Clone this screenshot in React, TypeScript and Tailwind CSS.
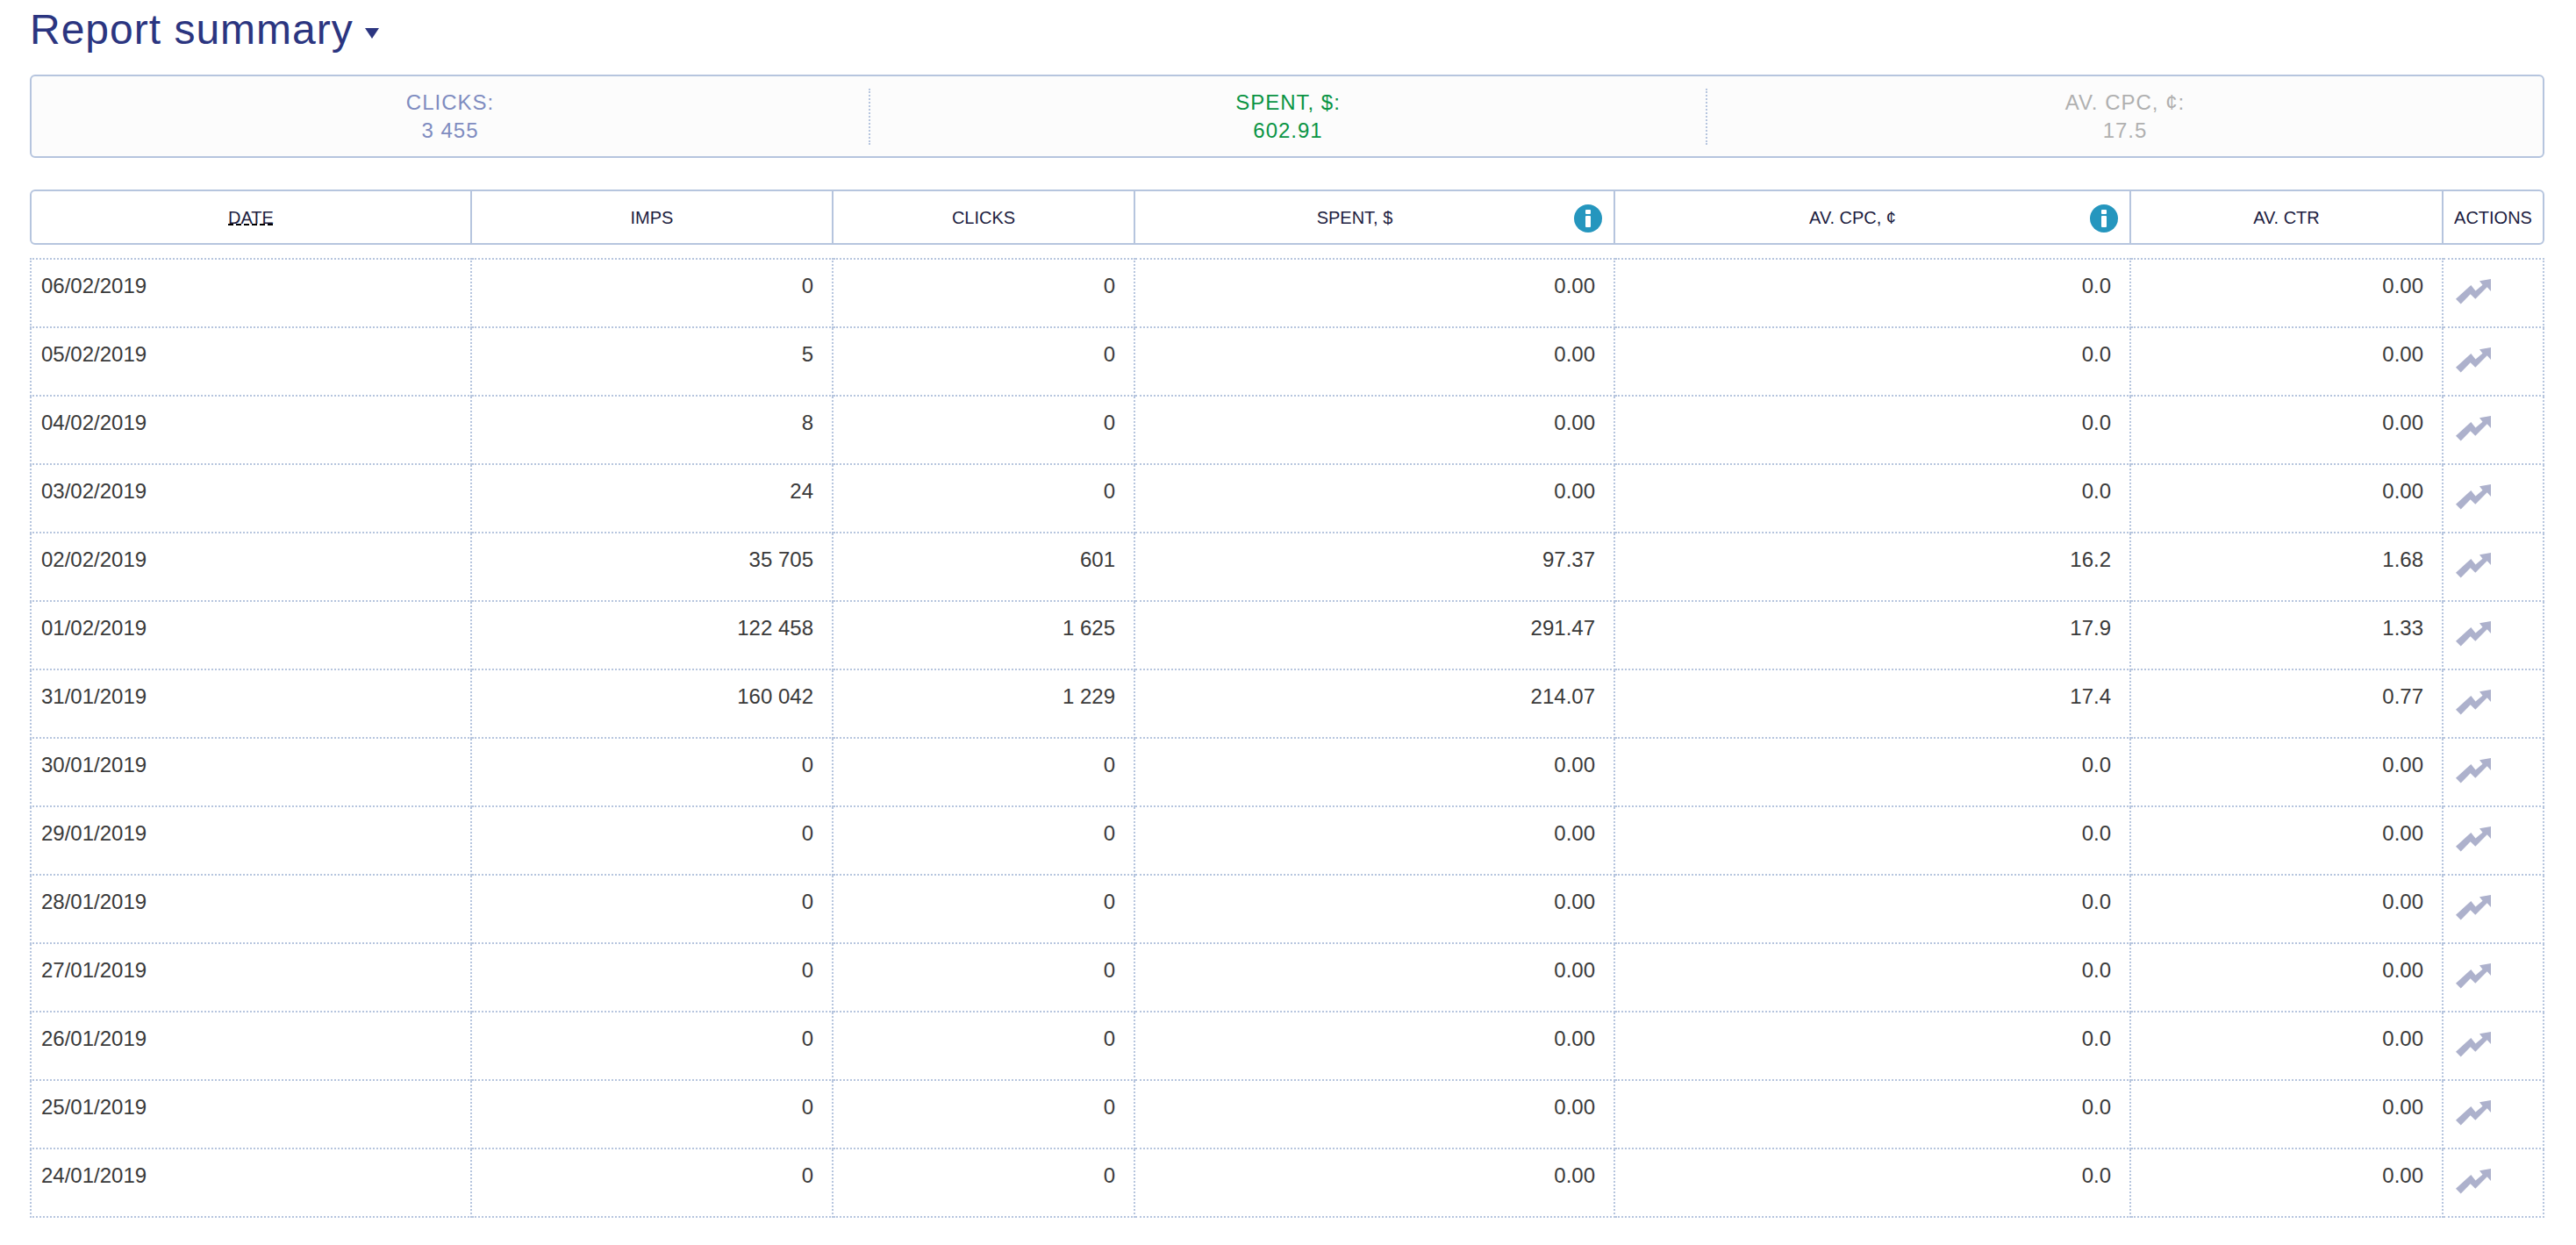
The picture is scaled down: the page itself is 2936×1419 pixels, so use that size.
import React from "react";

const rows: [string, string, string, string, string, string][] = [
  ["06/02/2019", "0", "0", "0.00", "0.0", "0.00"],
  ["05/02/2019", "5", "0", "0.00", "0.0", "0.00"],
  ["04/02/2019", "8", "0", "0.00", "0.0", "0.00"],
  ["03/02/2019", "24", "0", "0.00", "0.0", "0.00"],
  ["02/02/2019", "35 705", "601", "97.37", "16.2", "1.68"],
  ["01/02/2019", "122 458", "1 625", "291.47", "17.9", "1.33"],
  ["31/01/2019", "160 042", "1 229", "214.07", "17.4", "0.77"],
  ["30/01/2019", "0", "0", "0.00", "0.0", "0.00"],
  ["29/01/2019", "0", "0", "0.00", "0.0", "0.00"],
  ["28/01/2019", "0", "0", "0.00", "0.0", "0.00"],
  ["27/01/2019", "0", "0", "0.00", "0.0", "0.00"],
  ["26/01/2019", "0", "0", "0.00", "0.0", "0.00"],
  ["25/01/2019", "0", "0", "0.00", "0.0", "0.00"],
  ["24/01/2019", "0", "0", "0.00", "0.0", "0.00"],
];

function Info() {
  return (
    <svg viewBox="0 0 32 32" className="absolute right-[13px] top-[15px] h-[32px] w-[32px]">
      <circle cx="16" cy="16" r="16" fill="#2596be" />
      <rect x="13" y="6" width="6" height="5" rx="1" fill="#fff" />
      <rect x="13" y="13" width="6" height="13" rx="1" fill="#fff" />
    </svg>
  );
}

function Trend() {
  return (
    <svg viewBox="0 0 40 29" className="mt-[22px] ml-[14px] block h-[29px] w-[40px]">
      <polygon
        fill="#adb1cc"
        points="0,22.7 17.3,7 22.5,13.5 30.5,6.7 27,2.3 40,0 40,14 35.7,9.3 22.3,22.7 16.7,17.3 5.7,28.5"
      />
    </svg>
  );
}

const head = "relative flex items-center justify-center border-r-2 border-[#b6c5de] text-[20px] text-[#1d1d3f]";
const td = "h-[78px] border-2 border-dotted border-[#b6c5de] p-0 align-top text-[24px] leading-[32px] text-[#3a3a3a]";
const num = td + " pt-[14px] pr-[21px] text-right";

export default function App() {
  return (
    <div className="min-h-[1419px] bg-white pl-[34px] font-['Liberation_Sans',Arial,sans-serif]">
      <h1 className="flex h-[85px] items-start pt-[6px] text-[48px] leading-[56px] font-normal tracking-[1px] text-[#2b3580]">
        Report summary
        <span className="mt-[26px] ml-[13px] h-0 w-0 border-x-[8px] border-t-[12px] border-x-transparent border-t-[#2b3580]" />
      </h1>
      <div className="flex h-[95px] w-[2866px] items-center rounded-[6px] border-2 border-[#b6c5de] bg-[#fcfcfc] text-center text-[24px] leading-[32px] tracking-[1px]">
        <div className="w-[956px] border-r-2 border-dotted border-[#b6c5de] text-[#7f8cc0]">
          <div>CLICKS:</div>
          <div>3 455</div>
        </div>
        <div className="w-[954px] border-r-2 border-dotted border-[#b6c5de] text-[#0a9444]">
          <div>SPENT, $:</div>
          <div>602.91</div>
        </div>
        <div className="flex-1 text-[#b0b0b0]">
          <div>AV. CPC, ¢:</div>
          <div>17.5</div>
        </div>
      </div>
      <div className="mt-[36px] flex h-[63px] w-[2866px] rounded-[6px] border-2 border-[#b6c5de] bg-white">
        <div className={head + " w-[502px]"}>
          <span className="underline decoration-dashed decoration-black">DATE</span>
        </div>
        <div className={head + " w-[412px]"}>IMPS</div>
        <div className={head + " w-[344px]"}>CLICKS</div>
        <div className={head + " w-[547px] pr-[45px]"}>
          SPENT, $
          <Info />
        </div>
        <div className={head + " w-[588px] pr-[45px]"}>
          AV. CPC, ¢
          <Info />
        </div>
        <div className={head + " w-[356px]"}>AV. CTR</div>
        <div className="flex flex-1 items-center justify-center text-[20px] text-[#1d1d3f]">ACTIONS</div>
      </div>
      <table className="mt-[15px] w-[2866px] table-fixed border-collapse">
        <colgroup>
          <col className="w-[502px]" />
          <col className="w-[412px]" />
          <col className="w-[344px]" />
          <col className="w-[547px]" />
          <col className="w-[588px]" />
          <col className="w-[356px]" />
          <col />
        </colgroup>
        <tbody>
          {rows.map((r) => (
            <tr key={r[0]}>
              <td className={td + " pt-[14px] pl-[11px]"}>{r[0]}</td>
              <td className={num}>{r[1]}</td>
              <td className={num}>{r[2]}</td>
              <td className={num}>{r[3]}</td>
              <td className={num}>{r[4]}</td>
              <td className={num}>{r[5]}</td>
              <td className={td}>
                <Trend />
              </td>
            </tr>
          ))}
        </tbody>
      </table>
    </div>
  );
}
